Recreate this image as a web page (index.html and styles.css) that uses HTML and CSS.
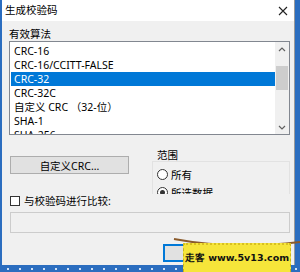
FILE: index.html
```html
<!DOCTYPE html>
<html lang="zh-CN">

<head>
    <meta charset="UTF-8">
    <title>生成校验码</title>
    <link rel="stylesheet" href="styles.css">
</head>

<body>
    <div class="win">
        <div class="titlebar">
            <span class="title">生成校验码</span>
            <svg class="close" width="10" height="10" viewBox="0 0 10 10">
                <path d="M1 1L9 9M9 1L1 9" stroke="#222" stroke-width="1.1" fill="none"/>
            </svg>
        </div>
        <div class="content">
            <div class="label">有效算法</div>
            <div class="listbox">
                <ul class="items">
                    <li>CRC-16</li>
                    <li>CRC-16/CCITT-FALSE</li>
                    <li class="sel">CRC-32</li>
                    <li>CRC-32C</li>
                    <li>自定义 CRC （32-位）</li>
                    <li>SHA-1</li>
                    <li>SHA-256</li>
                </ul>
                <div class="scroll">
                    <svg width="8" height="6" viewBox="0 0 8 6"><path d="M1 5L4 2L7 5" stroke="#606060" stroke-width="1.2" fill="none"/></svg>
                    <div class="track"><div class="thumb"></div></div>
                    <svg width="8" height="6" viewBox="0 0 8 6"><path d="M1 1L4 4L7 1" stroke="#606060" stroke-width="1.2" fill="none"/></svg>
                </div>
            </div>
            <div class="row">
                <div class="left">
                    <button class="btn">自定义CRC...</button>
                </div>
                <div class="group">
                    <div class="legend">范围</div>
                    <div class="frame">
                        <label class="radio"><span class="dot"></span>所有</label>
                        <label class="radio"><span class="dot on"></span>所选数据</label>
                    </div>
                </div>
            </div>
            <label class="check"><span class="box"></span>与校验码进行比较:</label>
            <div class="input"></div>
            <!-- 确定/取消按钮被水印盖住 -->
            <div class="actions">
                <button class="btn ok"></button>
                <button class="btn"></button>
            </div>
        </div>
    </div>
    <div class="taskbar"></div>
    <div class="mark">
        <svg class="rope" width="130" height="14" viewBox="0 0 130 14">
            <path d="M2 3Q60 14 128 6" stroke="#8a5a2b" stroke-width="2" fill="none"/>
        </svg>
        <div class="flag">走客 www.5v13.com</div>
    </div>
</body>

</html>
```

FILE: styles.css
```css
* {
    margin: 0;
    padding: 0;
    box-sizing: border-box;
}

body {
    width: 300px;
    height: 272px;
    overflow: hidden;
    position: relative;
    background: #2b6dbf;
    font: 10.5px "Noto Sans", "Noto Sans CJK SC", sans-serif;
    color: #000;
}

ul {
    list-style: none;
}

.win {
    margin-left: 2px;
    width: 293px;
    height: 265px;
    background: #f0f0f0;
    border-right: 1px solid #9a9a9a;
}

.titlebar {
    height: 21px;
    background: #fff;
    display: flex;
    align-items: center;
    justify-content: space-between;
    padding: 0 6px 0 3px;
}

.title {
    font-size: 10.5px;
    line-height: 21px;
}

.content {
    padding: 6px 4px 0 7px;
}

.label {
    line-height: 14px;
    height: 14px;
}

.listbox {
    height: 94px;
    border: 1px solid #828790;
    background: #fff;
    display: flex;
    overflow: hidden;
}

.items {
    flex: 1;
    padding: 2px 0 0 1px;
}

.items li {
    height: 14px;
    line-height: 14px;
    padding-left: 3px;
    white-space: nowrap;
}

.items .sel {
    background: #0078d7;
    color: #fff;
}

.scroll {
    width: 14px;
    background: #f0f0f0;
    display: flex;
    flex-direction: column;
    align-items: center;
    padding: 4px 0 3px;
}

.track {
    flex: 1;
    width: 100%;
    padding: 14px 1px 0;
}

.thumb {
    height: 24px;
    background: #cdcdcd;
}

.row {
    display: flex;
    margin-top: 13px;
    height: 46px;
}

.left {
    width: 143px;
    padding: 8px 0 0 1px;
}

.btn {
    font: inherit;
    height: 18px;
    background: #e1e1e1;
    border: 1px solid #adadad;
    color: #000;
}

.left .btn {
    width: 119px;
}

.group {
    flex: 1;
    overflow: hidden;
}

.legend {
    height: 13px;
    line-height: 14px;
    padding-left: 5px;
}

.frame {
    border: 1px solid #e2e2e2;
    border-bottom: 0;
    height: 40px;
    padding: 3px 0 0 4px;
}

.radio {
    display: flex;
    align-items: center;
    gap: 3px;
    height: 18px;
}

.dot {
    width: 11px;
    height: 11px;
    border: 1px solid #333;
    border-radius: 50%;
    background: #fff;
    display: flex;
    align-items: center;
    justify-content: center;
}

.dot.on::after {
    content: "";
    width: 5px;
    height: 5px;
    border-radius: 50%;
    background: #333;
}

.check {
    display: flex;
    align-items: center;
    gap: 4px;
    height: 13px;
    padding-left: 1px;
}

.box {
    width: 10px;
    height: 10px;
    border: 1px solid #333;
    background: #fff;
}

.input {
    margin: 5px 0 0 1px;
    height: 21px;
    border: 1px solid #cccccc;
    background: #f0f0f0;
}

.actions {
    display: flex;
    gap: 6px;
    padding-left: 154px;
    margin-top: 11px;
}

.actions .btn {
    width: 62px;
}

.ok {
    border-color: #0078d7 !important;
    box-shadow: inset 0 0 0 1px #0078d7;
}

.taskbar {
    height: 7px;
    background: repeating-linear-gradient(90deg, #2b6dbf 0 7px, #cfe0f5 7px 9px, #2b6dbf 9px 12px);
    background-size: 100% 2px;
    background-position: 0 3px;
    background-repeat: no-repeat;
}

/* 水印 */
.mark {
    position: absolute;
    left: 172px;
    top: 236px;
    width: 128px;
    height: 36px;
}

.rope {
    position: absolute;
    left: 0;
    top: 0;
}

.flag {
    position: absolute;
    left: 11px;
    top: 7px;
    width: 108px;
    height: 29px;
    background: #f6e53a;
    border-top: 2px dotted #d8c020;
    border-left: 1px dashed #c9b21c;
    border-right: 1px dashed #c9b21c;
    font: bold 9.5px "DejaVu Sans", sans-serif;
    line-height: 26px;
    text-align: center;
    color: #111;
    white-space: nowrap;
}
```
